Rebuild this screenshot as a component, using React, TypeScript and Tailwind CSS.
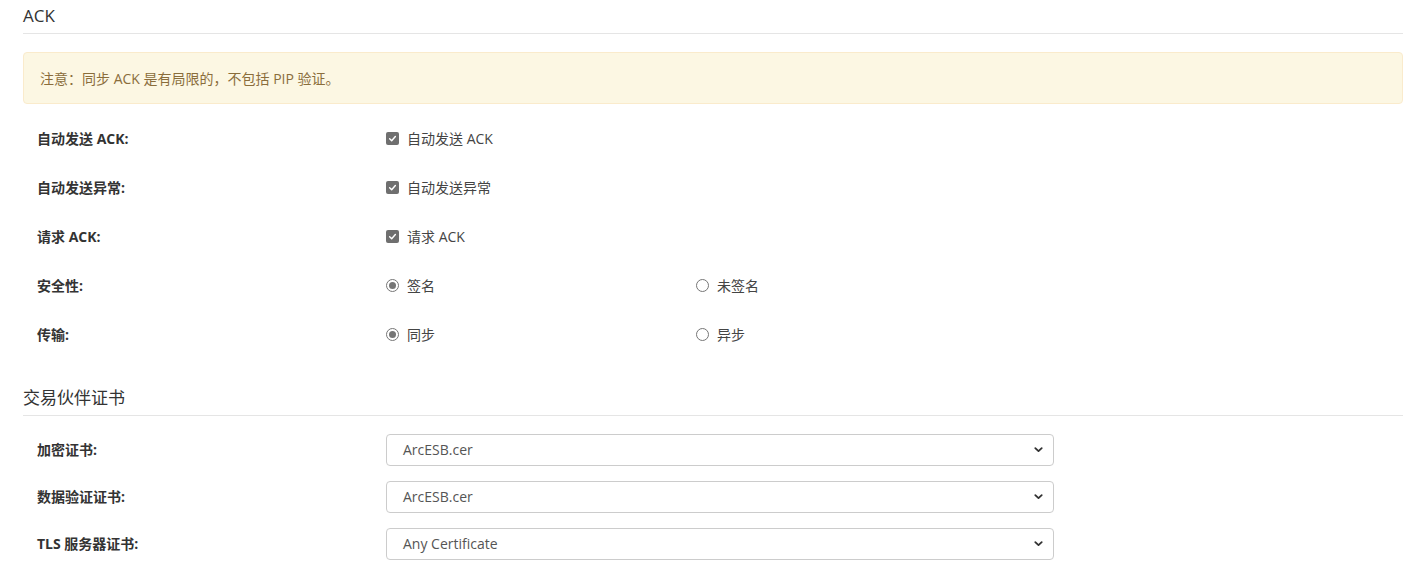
import React from 'react';

const font = { fontFamily: '"Open Sans", "Noto Sans CJK SC", sans-serif' };

function Check({ label }: { label: string }) {
  return (
    <label className="flex items-center gap-2 text-[14px] text-[#444]">
      <span className="flex h-[13px] w-[13px] items-center justify-center rounded-[2px] bg-[#6f6f6f]">
        <svg viewBox="0 0 12 12" className="h-[9px] w-[9px]">
          <path d="M2.2 6.3 L4.9 8.9 L9.8 3.3" fill="none" stroke="#fff" strokeWidth="1.9" strokeLinecap="round" strokeLinejoin="round" />
        </svg>
      </span>
      {label}
    </label>
  );
}

function Radio({ label, checked }: { label: string; checked?: boolean }) {
  return (
    <label className="flex items-center gap-2 text-[14px] text-[#444]">
      <span className="flex h-[13px] w-[13px] items-center justify-center rounded-full border border-[#767676] bg-white">
        {checked && <span className="h-[7px] w-[7px] rounded-full bg-[#767676]" />}
      </span>
      {label}
    </label>
  );
}

function Row({ label, children }: { label: string; children: React.ReactNode }) {
  return (
    <div className="flex h-[49px] items-center pl-[14px]">
      <div className="w-[349px] text-[14px] font-bold text-[#333]">{label}</div>
      <div className="flex items-center">{children}</div>
    </div>
  );
}

function SelectRow({ label, value }: { label: string; value: string }) {
  return (
    <div className="flex h-[47px] items-center pl-[14px]">
      <div className="w-[349px] text-[14px] font-bold text-[#333]">{label}</div>
      <div className="flex h-[32px] w-[668px] items-center justify-between rounded-[4px] border border-[#ccc] bg-white pl-[16px] pr-[9px] text-[14px] text-[#555]">
        <span>{value}</span>
        <svg viewBox="0 0 12 12" className="h-[11px] w-[11px]">
          <path d="M2.5 4.5 L6 7.8 L9.5 4.5" fill="none" stroke="#333" strokeWidth="2" strokeLinecap="round" strokeLinejoin="round" />
        </svg>
      </div>
    </div>
  );
}

export default function App() {
  return (
    <div className="min-h-[571px] bg-white px-[23px] pr-[25px]" style={font}>
      <div className="border-b border-[#e5e5e5] pb-[5px] pt-[4px] text-[17px] leading-6 text-[#333]">ACK</div>

      <div className="mt-[18px] flex h-[52px] items-center rounded-[4px] border border-[#faebcc] bg-[#fcf7e3] pl-[16px] text-[14px] text-[#8a6d3b]">
        注意：同步 ACK 是有局限的，不包括 PIP 验证。
      </div>

      <div className="mt-[10px]">
        <Row label="自动发送 ACK:">
          <Check label="自动发送 ACK" />
        </Row>
        <Row label="自动发送异常:">
          <Check label="自动发送异常" />
        </Row>
        <Row label="请求 ACK:">
          <Check label="请求 ACK" />
        </Row>
        <Row label="安全性:">
          <div className="w-[310px]">
            <Radio label="签名" checked />
          </div>
          <Radio label="未签名" />
        </Row>
        <Row label="传输:">
          <div className="w-[310px]">
            <Radio label="同步" checked />
          </div>
          <Radio label="异步" />
        </Row>
      </div>

      <div className="mt-[23px] border-b border-[#e5e5e5] pb-[5px] pt-[4px] text-[17px] leading-6 text-[#333]">交易伙伴证书</div>

      <div className="mt-[10px]">
        <SelectRow label="加密证书:" value="ArcESB.cer" />
        <SelectRow label="数据验证证书:" value="ArcESB.cer" />
        <SelectRow label="TLS 服务器证书:" value="Any Certificate" />
      </div>
    </div>
  );
}
